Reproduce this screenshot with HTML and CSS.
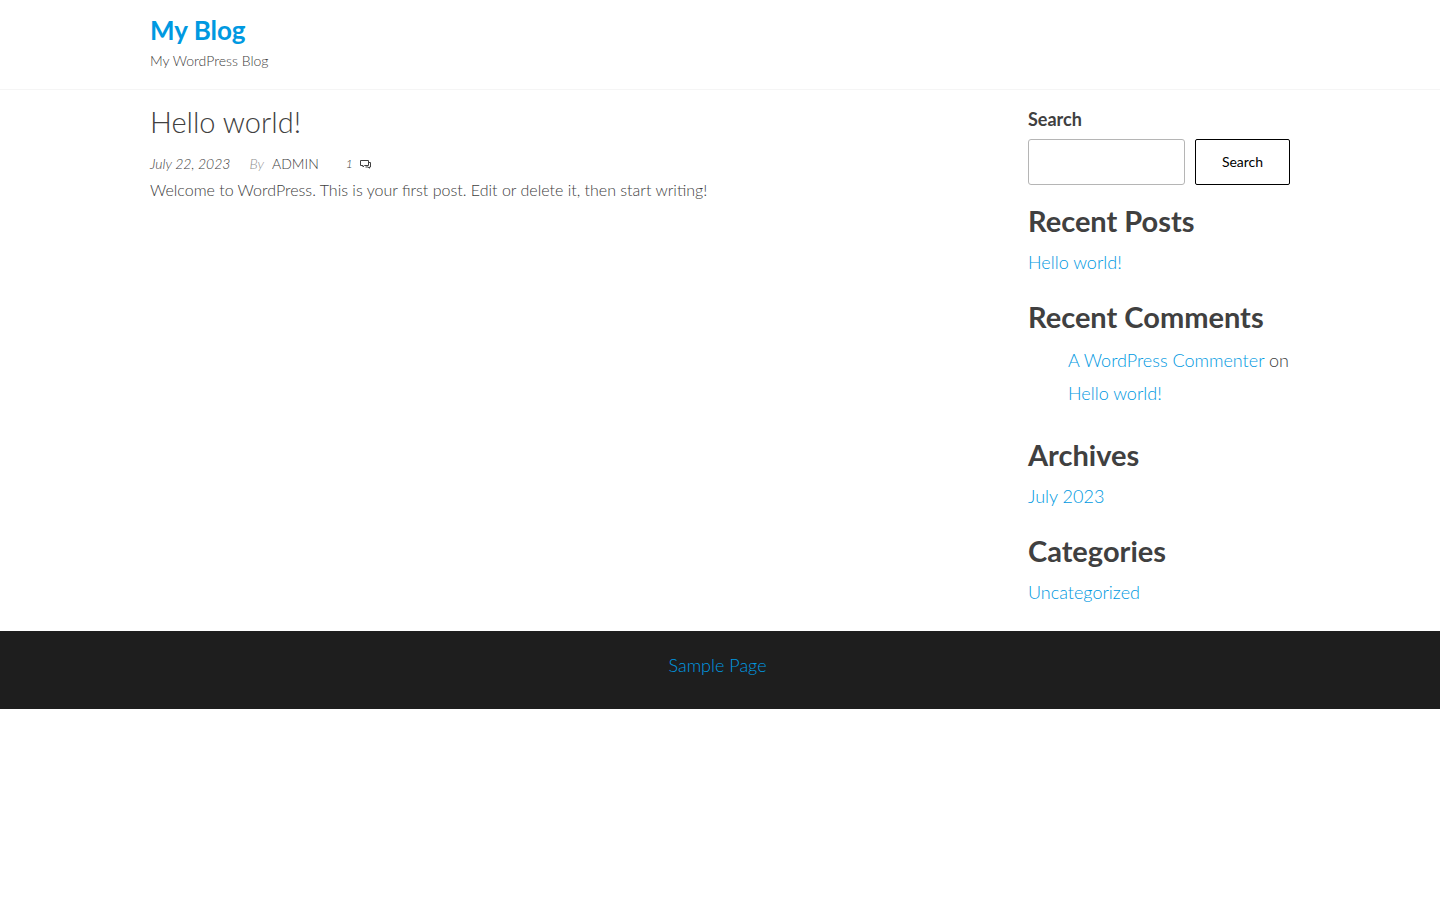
FILE: index.html
```
<!DOCTYPE html>
<html lang="en">
<head>
<meta charset="utf-8">
<title>My Blog</title>
<link rel="stylesheet" href="styles.css">
</head>
<body>
<header class="site-header">
  <div class="container">
    <p class="site-title"><a href="#">My Blog</a></p>
    <p class="site-description">My WordPress Blog</p>
  </div>
</header>
<div class="container content">
  <main class="main">
    <article>
      <h1 class="post-title"><a href="#">Hello world!</a></h1>
      <div class="post-meta">
        <span class="date">July 22, 2023</span>
        <span class="author"><span class="by">By</span><a href="#">admin</a></span>
        <a class="comments" href="#" aria-label="1 comment">1<svg class="icon" viewBox="0 0 12 10" aria-hidden="true"><path d="M.5 1.500h8v5H4.500L3 8V6.500H.5zM8.500 3.500h2v4.500H9.500v1.200L8 8H5.500"/></svg></a>
      </div>
      <p class="post-text">Welcome to WordPress. This is your first post. Edit or delete it, then start writing!</p>
    </article>
  </main>
  <aside class="sidebar">
    <form class="search" role="search">
      <label class="search-label" for="search">Search</label>
      <div class="search-row">
        <input class="search-input" id="search" type="search">
        <button class="search-button" type="button">Search</button>
      </div>
    </form>
    <section class="widget">
      <h2>Recent Posts</h2>
      <ul><li><a href="#">Hello world!</a></li></ul>
    </section>
    <section class="widget">
      <h2>Recent Comments</h2>
      <ol class="comment-list"><li><a href="#">A WordPress Commenter</a> on <a href="#">Hello world!</a></li></ol>
    </section>
    <section class="widget">
      <h2>Archives</h2>
      <ul><li><a href="#">July 2023</a></li></ul>
    </section>
    <section class="widget">
      <h2>Categories</h2>
      <ul><li><a href="#">Uncategorized</a></li></ul>
    </section>
  </aside>
</div>
<footer class="site-footer">
  <nav><a class="footer-link" href="#">Sample Page</a></nav>
</footer>
</body>
</html>
```
FILE: styles.css
```
* { box-sizing: border-box; }
body {
  margin: 0;
  background: #fff;
  color: #404040;
  font-family: Lato, sans-serif;
  font-size: 18px;
  font-weight: 300;
  line-height: 33px;
}
a { color: #0099e1; text-decoration: none; }
h1, h2, p, ul, ol { margin: 0; padding: 0; }
ul, ol { list-style: none; }
.container { max-width: 1170px; margin: 0 auto; padding: 0 15px; }
.site-header { border-bottom: 1px solid #f5f5f5; padding: 15px 0; }
.site-title { font-size: 26px; font-weight: 700; line-height: 30px; }
.site-description { margin-top: 3px; font-size: 14px; line-height: 26px; }
.content { display: flex; }
.main { flex: 1; padding-top: 15px; }
.post-title { font-size: 29px; font-weight: 300; line-height: 34px; }
.post-title a { color: #404040; }
.post-meta { display: flex; margin-top: 12px; font-size: 14px; line-height: 26px; }
.date, .by, .comments { font-style: italic; }
.author { margin-left: 19px; text-transform: uppercase; }
.author a, .post-meta .comments { color: #404040; }
.by { margin-right: 8px; color: #8f8f8f; text-transform: none; }
.comments { display: flex; align-items: center; gap: 7px; margin-left: 27px; font-size: 12px; }
.icon { width: 12px; height: 10px; fill: none; stroke: #404040; }
.post-text { font-size: 16px; line-height: 26px; }
.sidebar { flex: 0 0 262px; min-width: 0; padding-top: 13px; }
.search-label { display: block; font-weight: 700; }
.search-row { display: flex; gap: 10px; margin-top: 3px; }
.search-input { flex: 1; min-width: 0; border: 1px solid #b5b5b5; border-radius: 3px; background: #fff; font: inherit; }
.search-button { width: 95px; height: 46px; border: 1px solid #000; border-radius: 2px; background: #fff; color: #000; font: 400 14px/20px Lato, sans-serif; }
.widget { margin-top: 19px; }
.widget h2 { font-size: 29px; font-weight: 700; line-height: 34px; }
.widget ul { margin-top: 8px; padding-bottom: 2px; }
.widget .comment-list { margin-top: 10px; padding: 0 0 9px 40px; }
.site-footer { margin-top: 20px; padding: 18px 0 27px; background: #1e1e1e; text-align: center; }
.footer-link { padding-right: 5px; }
```
